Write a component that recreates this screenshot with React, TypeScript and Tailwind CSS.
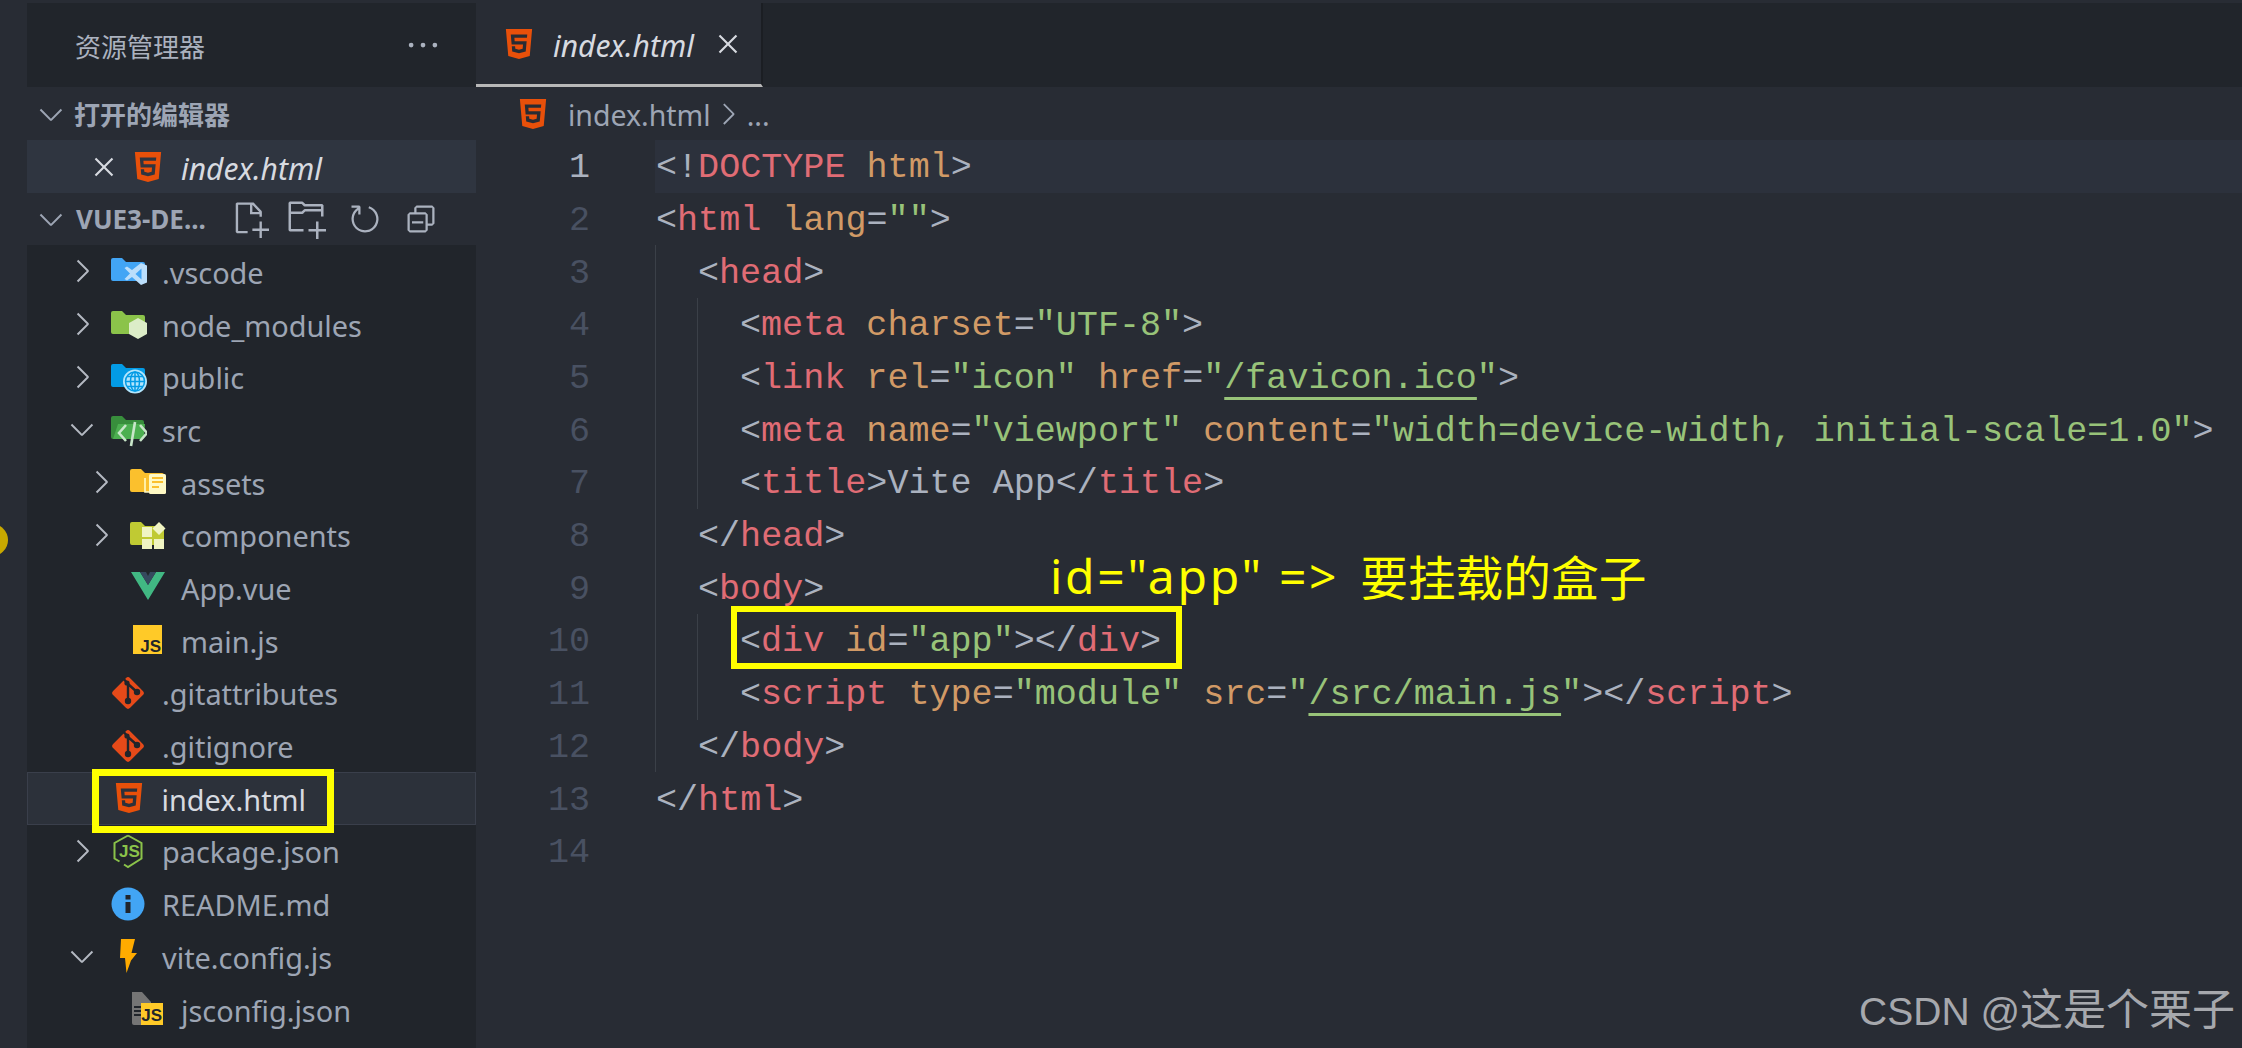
import React from "react";
import { SiHtml5 } from "react-icons/si";
import { VscChevronDown, VscChevronRight, VscClose, VscCollapseAll, VscEllipsis, VscNewFile, VscNewFolder, VscRefresh } from "react-icons/vsc";

const P = "text-[#abb2bf]";
const T = "text-[#e06c75]";
const A = "text-[#d19a66]";
const S = "text-[#98c379]";
const U = "text-[#98c379] underline underline-offset-[9px] decoration-[3px]";
type Tok = [string, string];
type Line = { indent: number; toks: Tok[] };

const LINES: Line[] = [
  { indent: 0, toks: [[P, "<!"], [T, "DOCTYPE"], [P, " "], [A, "html"], [P, ">"]] },
  { indent: 0, toks: [[P, "<"], [T, "html"], [P, " "], [A, "lang"], [P, "="], [S, '""'], [P, ">"]] },
  { indent: 1, toks: [[P, "<"], [T, "head"], [P, ">"]] },
  { indent: 2, toks: [[P, "<"], [T, "meta"], [P, " "], [A, "charset"], [P, "="], [S, '"UTF-8"'], [P, ">"]] },
  { indent: 2, toks: [[P, "<"], [T, "link"], [P, " "], [A, "rel"], [P, "="], [S, '"icon"'], [P, " "], [A, "href"], [P, "="], [S, '"'], [U, "/favicon.ico"], [S, '"'], [P, ">"]] },
  { indent: 2, toks: [[P, "<"], [T, "meta"], [P, " "], [A, "name"], [P, "="], [S, '"viewport"'], [P, " "], [A, "content"], [P, "="], [S, '"width=device-width, initial-scale=1.0"'], [P, ">"]] },
  { indent: 2, toks: [[P, "<"], [T, "title"], [P, ">Vite App</"], [T, "title"], [P, ">"]] },
  { indent: 1, toks: [[P, "</"], [T, "head"], [P, ">"]] },
  { indent: 1, toks: [[P, "<"], [T, "body"], [P, ">"]] },
  { indent: 2, toks: [[P, "<"], [T, "div"], [P, " "], [A, "id"], [P, "="], [S, '"app"'], [P, "></"], [T, "div"], [P, ">"]] },
  { indent: 2, toks: [[P, "<"], [T, "script"], [P, " "], [A, "type"], [P, "="], [S, '"module"'], [P, " "], [A, "src"], [P, "="], [S, '"'], [U, "/src/main.js"], [S, '"'], [P, "></"], [T, "script"], [P, ">"]] },
  { indent: 1, toks: [[P, "</"], [T, "body"], [P, ">"]] },
  { indent: 0, toks: [[P, "</"], [T, "html"], [P, ">"]] },
  { indent: 0, toks: [] },
];

const FOLDER = "M0 7a2 2 0 0 1 2-2h9l4 4h17a2 2 0 0 1 2 2v15a2 2 0 0 1-2 2H2a2 2 0 0 1-2-2z";

function Box({ children }: { children: React.ReactNode }) {
  return <svg width="36" height="36" viewBox="0 0 36 36" className="shrink-0">{children}</svg>;
}

const IconVscode = () => (
  <Box>
    <path d={FOLDER} fill="#42a5f5" />
    <path d="M30 10l6 2.5v17L30 32l-9-8-5 3.5-2.5-1.5 5.5-5.5-5.5-5.5 2.5-1.5 5 3.5z" fill="#bbdefb" />
    <path d="M30.5 15.5l-6 5.5 6 5.5z" fill="#42a5f5" />
  </Box>
);
const IconNode = () => (
  <Box>
    <path d={FOLDER} fill="#8bc34a" />
    <path d="M27 12l9 5v11l-9 5-9-5V17z" fill="#dcedc8" />
  </Box>
);
const IconPublic = () => (
  <Box>
    <path d={FOLDER} fill="#039be5" />
    <circle cx="24" cy="22.5" r="12" fill="#b3e5fc" />
    <g fill="none" stroke="#039be5" strokeWidth="1.5">
      <circle cx="24" cy="22.5" r="9.5" />
      <ellipse cx="24" cy="22.5" rx="4.5" ry="9.5" />
      <path d="M24 13v19M14.5 22.5h19M16 17.5h16M16 27.5h16" />
    </g>
  </Box>
);
const IconSrc = () => (
  <Box>
    <path d="M0 7a2 2 0 0 1 2-2h9l4 4h16a2 2 0 0 1 2 2v2H8L3 28H2a2 2 0 0 1-2-2z" fill="#388e3c" />
    <path d="M7 13h27l-1 13a2 2 0 0 1-2 2H2z" fill="#4caf50" />
    <g fill="none" stroke="#c8e6c9" strokeWidth="2.6">
      <path d="M15 14l-7 8 7 8" />
      <path d="M29 14l7 8-7 8" />
      <path d="M24 11l-4 24" />
    </g>
  </Box>
);
const IconAssets = () => (
  <Box>
    <path d={FOLDER} fill="#fbc02d" />
    <path d="M15 14v14h16" fill="none" stroke="#fff9c4" strokeWidth="1.6" />
    <rect x="19" y="10" width="17" height="20" rx="1.5" fill="#fff9c4" />
    <path d="M22 14h11M22 18h11M22 23h7" stroke="#fbc02d" strokeWidth="2" />
  </Box>
);
const IconComponents = () => (
  <Box>
    <path d={FOLDER} fill="#c0ca33" />
    <g fill="#f0f4c3">
      <rect x="12" y="10" width="10" height="10" />
      <rect x="12" y="22" width="10" height="10" />
      <rect x="24" y="22" width="10" height="10" />
      <path d="M29 5l6.500 6.500L29 18l-6.500-6.500z" />
    </g>
  </Box>
);
const IconVue = () => (
  <Box>
    <path d="M1 3h9l8 13 8-13h9L18 31z" fill="#41b883" />
    <path d="M10 3h6l2 4 2-4h6l-8 13z" fill="#35495e" />
  </Box>
);
const IconJs = () => (
  <Box>
    <rect x="3" y="3" width="29" height="29" fill="#ffca28" />
    <text x="31" y="30" textAnchor="end" fontFamily="'Liberation Sans',sans-serif" fontWeight="700" fontSize="17" fill="#21252b">JS</text>
  </Box>
);
const IconGit = () => (
  <Box>
    <rect x="5" y="6" width="24" height="24" rx="3" transform="rotate(45 17 18)" fill="#e64a19" />
    <g fill="none" stroke="#21252b" strokeWidth="2.400">
      <path d="M11 2l6 7v16M17 9l9 8" />
    </g>
    <circle cx="17" cy="26" r="3.200" fill="#21252b" />
    <circle cx="26" cy="17" r="3.200" fill="#21252b" />
    <circle cx="16" cy="8" r="2.600" fill="#21252b" />
  </Box>
);
const IconPackage = () => (
  <Box>
    <path d="M17 2.500l13.500 7.500v15.500L17 34l-4-2.500" fill="none" stroke="#8bc34a" strokeWidth="2" />
    <path d="M17 2.500L3.500 10v15.500l5 3" fill="none" stroke="#8bc34a" strokeWidth="2" />
    <text x="8" y="24" fontFamily="'Liberation Sans',sans-serif" fontWeight="700" fontSize="17" fill="#8bc34a">JS</text>
  </Box>
);
const IconInfo = () => (
  <Box>
    <circle cx="17" cy="18" r="16.500" fill="#42a5f5" />
    <rect x="14.500" y="9" width="5" height="4.500" fill="#21252b" />
    <rect x="14.500" y="16" width="5" height="11" fill="#21252b" />
  </Box>
);
const IconVite = () => (
  <Box>
    <path d="M10 1h14l-3.500 14H26l-6 7.500L15.500 35l-1.500-15H9z" fill="#ffab00" />
  </Box>
);
const IconJsconfig = () => (
  <Box>
    <path d="M2 1h10l9 10v23H4a2 2 0 0 1-2-2z" fill="#757575" />
    <path d="M4 16h7M4 20h7M4 24h7" stroke="#21252b" strokeWidth="1.800" />
    <rect x="11" y="12" width="22" height="22" fill="#ffca28" />
    <text x="32" y="30" textAnchor="end" fontFamily="'Liberation Sans',sans-serif" fontWeight="700" fontSize="17" fill="#21252b">JS</text>
  </Box>
);
const IconHtml = () => (
  <span className="flex w-[36px] shrink-0 justify-center">
    <SiHtml5 className="h-[30px] w-[30px] text-[#e8500a]" />
  </span>
);

type RowProps = {
  level: 1 | 2;
  chevron?: "open" | "closed";
  icon: React.ReactNode;
  name: string;
  selected?: boolean;
};

function TreeRow({ level, chevron, icon, name, selected }: RowProps) {
  return (
    <div
      className={
        "relative flex h-[52.7px] shrink-0 items-center " +
        (selected
          ? "border-[1.5px] border-[#3a3f4b] bg-[#2c313a] pl-[35.500px] text-[#d7dae0]"
          : (level === 1 ? "pl-[37px] " : "pl-[56px] ") + "text-[#9da5b4]")
      }
    >
      <span className="flex w-[36px] shrink-0 items-center justify-center text-[#b4b9c2]">
        {chevron === "open" && <VscChevronDown size={36} />}
        {chevron === "closed" && <VscChevronRight size={36} />}
      </span>
      <span className="ml-[11px] flex w-[36px] shrink-0 items-center">{icon}</span>
      <span className="ml-[15px] pt-[4px] leading-none">{name}</span>
      {selected && <div className="absolute left-[64px] top-[-4px] h-[64px] w-[242px] border-[7px] border-[#ffff00]" />}
    </div>
  );
}

function Sidebar() {
  return (
    <aside className="flex w-[449px] shrink-0 flex-col pt-[3px] text-[28.900px] font-['Noto_Sans','Noto_Sans_CJK_SC',sans-serif]">
      <div className="flex h-[84px] shrink-0 items-center justify-between bg-[#21252b] pl-[48px] pr-[34px] text-[26px] text-[#abb2bf]">
        <span className="font-['Noto_Sans_CJK_SC',sans-serif]">资源管理器</span>
        <VscEllipsis size={38} />
      </div>
      <div className="flex h-[53px] shrink-0 items-center pl-[6px] text-[26px] font-bold text-[#9da5b4]">
        <VscChevronDown size={36} className="shrink-0" />
        <span className="ml-[5px] font-['Noto_Sans_CJK_SC',sans-serif]">打开的编辑器</span>
      </div>
      <div className="flex h-[53px] shrink-0 items-center bg-[#2f3540] pl-[60px] text-[30px] italic text-[#d7dae0]">
        <VscClose size={34} className="shrink-0" />
        <span className="ml-[9px] flex"><IconHtml /></span>
        <span className="ml-[15px] pt-[4px] leading-none">index.html</span>
      </div>
      <div className="flex h-[52px] shrink-0 items-center pl-[6px] text-[#9da5b4]">
        <VscChevronDown size={36} className="shrink-0" />
        <span className="ml-[7px] w-[146px] text-[26px] font-bold">VUE3-DE...</span>
        <span className="ml-[9px] flex items-center text-[#abb2bf]">
          <VscNewFile size={38} />
          <VscNewFolder size={40} className="ml-[17px]" />
          <VscRefresh size={36} className="ml-[21px]" />
          <VscCollapseAll size={36} className="ml-[20px]" />
        </span>
      </div>
      <div className="flex flex-1 flex-col bg-[#21252b]">
        <TreeRow level={1} chevron="closed" icon={<IconVscode />} name=".vscode" />
        <TreeRow level={1} chevron="closed" icon={<IconNode />} name="node_modules" />
        <TreeRow level={1} chevron="closed" icon={<IconPublic />} name="public" />
        <TreeRow level={1} chevron="open" icon={<IconSrc />} name="src" />
        <TreeRow level={2} chevron="closed" icon={<IconAssets />} name="assets" />
        <TreeRow level={2} chevron="closed" icon={<IconComponents />} name="components" />
        <TreeRow level={2} icon={<IconVue />} name="App.vue" />
        <TreeRow level={2} icon={<IconJs />} name="main.js" />
        <TreeRow level={1} icon={<IconGit />} name=".gitattributes" />
        <TreeRow level={1} icon={<IconGit />} name=".gitignore" />
        <TreeRow level={1} icon={<IconHtml />} name="index.html" selected />
        <TreeRow level={1} chevron="closed" icon={<IconPackage />} name="package.json" />
        <TreeRow level={1} icon={<IconInfo />} name="README.md" />
        <TreeRow level={1} chevron="open" icon={<IconVite />} name="vite.config.js" />
        <TreeRow level={2} icon={<IconJsconfig />} name="jsconfig.json" />
      </div>
    </aside>
  );
}

function CodeLine({ line, n }: { line: Line; n: number }) {
  const active = n === 1;
  return (
    <div className="flex h-[52.7px] shrink-0 items-stretch">
      <div className={"w-[114px] shrink-0 self-center pt-[5px] text-right " + (active ? "text-[#abb2bf]" : "text-[#495162]")}>{n}</div>
      <div className={"relative ml-[65px] flex flex-1 items-stretch " + (active ? "bg-[#2c313c]" : "")}>
        {Array.from({ length: line.indent }).map((_, i) => (
          <span key={i} className="w-[42px] shrink-0 border-l border-[#3b4048]" />
        ))}
        <span className="self-center whitespace-pre pl-px pt-[5px]">
          {line.toks.map(([c, s], i) => (
            <span key={i} className={c}>{s}</span>
          ))}
        </span>
        {n === 10 && <div className="absolute left-[76px] top-[-8px] h-[63px] w-[451px] border-[6px] border-[#ffff00]" />}
      </div>
    </div>
  );
}

function Editor() {
  return (
    <main className="relative flex min-w-0 flex-1 flex-col pt-[3px]">
      <div className="flex h-[84px] shrink-0 bg-[#21252b]">
        <div className="flex w-[287px] items-center border-b-[3px] border-r-2 border-b-[#b8b8b8] border-r-[#1b1e23] bg-[#282c34] pl-[28px] text-[30px] italic text-[#d7dae0] font-['Noto_Sans',sans-serif]">
          <SiHtml5 className="h-[30px] w-[30px] shrink-0 text-[#e8500a]" />
          <span className="ml-[19px] pt-[4px] leading-none">index.html</span>
          <VscClose size={34} className="ml-[17px] shrink-0" />
        </div>
      </div>
      <div className="flex h-[53px] shrink-0 items-center pl-[42px] text-[28.500px] text-[#9da5b4] font-['Noto_Sans',sans-serif]">
        <SiHtml5 className="h-[30px] w-[30px] shrink-0 text-[#e8500a]" />
        <span className="ml-[20px] pt-[3px] leading-none">index.html</span>
        <VscChevronRight size={34} className="shrink-0" />
        <span className="ml-[2px] pt-[3px] leading-none">...</span>
      </div>
      <div className="flex flex-col text-[35.100px] leading-none font-['Liberation_Mono',monospace]">
        {LINES.map((l, i) => (
          <CodeLine key={i} line={l} n={i + 1} />
        ))}
      </div>
      <div className="absolute left-[574px] top-[544px] flex items-center whitespace-pre leading-[64px] text-[#ffff00] font-['Noto_Sans','Noto_Sans_CJK_SC',sans-serif]">
        <span className="text-[48px] tracking-[2.700px]">id="app" =&gt;</span>
        <span className="ml-[21px] text-[47.700px] font-['Noto_Sans_CJK_SC',sans-serif]">要挂载的盒子</span>
      </div>
      <div className="absolute right-[7px] top-[982px] flex items-baseline whitespace-pre leading-[56px] text-[#a6a8ad] font-['Liberation_Sans','Noto_Sans_CJK_SC',sans-serif]">
        <span className="text-[39px]">CSDN @</span>
        <span className="text-[43px]">这是个栗子</span>
      </div>
    </main>
  );
}

export default function App() {
  return (
    <div className="flex h-[1048px] w-[2242px] overflow-hidden bg-[#282c34]">
      <div className="relative w-[27px] shrink-0 overflow-hidden">
        <div className="absolute left-[-24px] top-[524px] h-[32px] w-[32px] rounded-full bg-[#c8a800]" />
      </div>
      <Sidebar />
      <Editor />
    </div>
  );
}
